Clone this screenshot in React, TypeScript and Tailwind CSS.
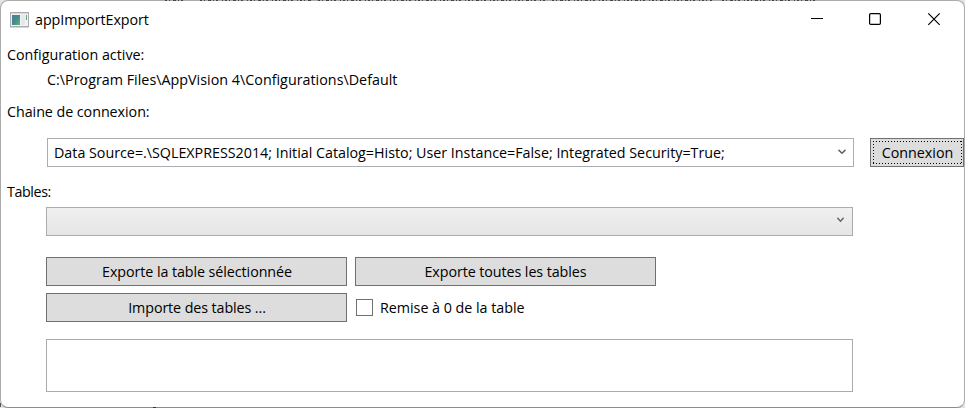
import React from "react";

function Chevron({ className }: { className: string }) {
  return (
    <svg className={className} viewBox="0 0 8 6" preserveAspectRatio="none" fill="none" stroke="#606060" strokeWidth="1.5">
      <path d="M0.5 0.9 4 4.2 7.5 0.9" />
    </svg>
  );
}

function AppIcon() {
  return (
    <svg width="19" height="16" viewBox="0 0 19 16">
      <defs>
        <linearGradient id="screen" x1="0" y1="0" x2="1" y2="1">
          <stop offset="0" stopColor="#4a78b0" />
          <stop offset="0.5" stopColor="#458c86" />
          <stop offset="1" stopColor="#62b579" />
        </linearGradient>
      </defs>
      <rect x="0.5" y="0.5" width="18" height="14" fill="#f0f2f4" stroke="#a9adb1" />
      <rect x="1" y="1" width="17" height="1" fill="#d4d8dc" />
      <rect x="2" y="3" width="8" height="10" fill="url(#screen)" />
      <rect x="11" y="3" width="4" height="10" fill="#e6e9eb" />
      <rect x="16" y="3" width="1" height="5" fill="#58a886" />
      <rect x="0" y="15" width="19" height="1" fill="#d6d6d6" />
    </svg>
  );
}

/* Top pixel row of a line of text in the window behind. */
function BackdropText() {
  return (
    <svg className="absolute left-0 top-0" width="965" height="1">
      <path d="M165 .5H186M200 .5H312M318 .5H546M552 .5H712M722 .5H819" stroke="#454545" strokeWidth="1" strokeDasharray="2 2 1 3 3 2 1 2 2 4 1 2" />
    </svg>
  );
}

function Button({ children, className }: { children: React.ReactNode; className: string }) {
  return (
    <button
      type="button"
      className={`flex h-[29px] items-center justify-center border border-[#707070] bg-[#dddddd] whitespace-nowrap ${className}`}
    >
      {children}
    </button>
  );
}

export default function App() {
  return (
    <div className="relative h-[408px] w-[965px] overflow-hidden bg-[#e4e4e4] font-['Open_Sans','Noto_Sans',sans-serif] text-[14.3px] leading-[20px] text-black">
      <div className="flex h-full flex-col rounded-[8px] border border-[#ababab] border-b-[#8c8c8c] bg-white">
        <header className="flex h-[37px] items-center pl-[9px]">
          <AppIcon />
          <span className="ml-[6px] whitespace-nowrap tracking-[-0.05px]">appImportExport</span>
          <div className="ml-auto flex items-center pr-[23px]">
            <svg width="130" height="13" viewBox="0 0 130 13" fill="none" stroke="#000" strokeWidth="1.2">
              <path d="M0 5.5H12" strokeWidth="1" />
              <rect x="58.6" y="0.6" width="10.8" height="10.8" rx="1.2" />
              <path d="M117.3.4 128.7 11.8M128.7.4 117.3 11.8" />
            </svg>
          </div>
        </header>

        <main className="flex flex-col">
          <p className="mt-[7px] ml-[6px]">Configuration active:</p>
          <p className="mt-[5px] ml-[46px] tracking-[0.015px]">{"C:\\Program Files\\AppVision 4\\Configurations\\Default"}</p>
          <p className="mt-[12px] ml-[6px] tracking-[-0.05px]">Chaine de connexion:</p>

          <div className="mt-[16px] ml-[46px] flex">
            <div className="flex h-[29px] w-[807px] items-center justify-between border border-[#abadb3] bg-white pr-[7px] pl-[6px]">
              <span className="whitespace-nowrap tracking-[-0.01px]">
                {"Data Source=.\\SQLEXPRESS2014; Initial Catalog=Histo; User Instance=False; Integrated Security=True;"}
              </span>
              <Chevron className="mb-[2px] h-[6px] w-[8px]" />
            </div>
            <Button className="relative ml-[16px] w-[94px]">
              <svg className="absolute left-[2px] top-[2px]" width="90" height="23" fill="none" stroke="#000" strokeDasharray="1 2">
                <path d="M0 .5H89M0 22.5H89M.5 0V23M88.5 0V23" />
              </svg>
              <span className="mt-px ml-px">Connexion</span>
            </Button>
          </div>

          <p className="mt-[15px] ml-[6px] tracking-[-0.4px]">Tables:</p>
          <div className="mt-[5px] ml-[45px] flex h-[29px] w-[807px] justify-end border border-[#acacac] bg-linear-to-b from-[#f0f0f0] to-[#e5e5e5] pt-[9px] pr-[8px]">
            <Chevron className="h-[6px] w-[7px]" />
          </div>

          <div className="mt-[21px] ml-[45px] flex gap-[8px]">
            <Button className="w-[301px] pl-px tracking-[-0.075px]">Exporte la table sélectionnée</Button>
            <Button className="w-[301px] tracking-[-0.08px]">Exporte toutes les tables</Button>
          </div>
          <div className="mt-[7px] ml-[45px] flex">
            <Button className="w-[301px] pl-px tracking-[-0.1px]">
              <span className="mt-px">Importe des tables ...</span>
            </Button>
            <label className="ml-[9px] flex h-[29px] items-center">
              <span className="h-[17px] w-[17px] border border-[#707070] bg-white" />
              <span className="ml-[7px] tracking-[-0.02px]">Remise à 0 de la table</span>
            </label>
          </div>

          <div className="mt-[17px] ml-[45px] h-[53px] w-[807px] border border-[#ababab] bg-white" />
        </main>
      </div>
      <BackdropText />
      <div className="absolute bottom-0 left-[153px] h-px w-[3px] bg-[#333]" />
      <div className="absolute bottom-[1px] left-0 h-[4px] w-px bg-[#555]" />
    </div>
  );
}
